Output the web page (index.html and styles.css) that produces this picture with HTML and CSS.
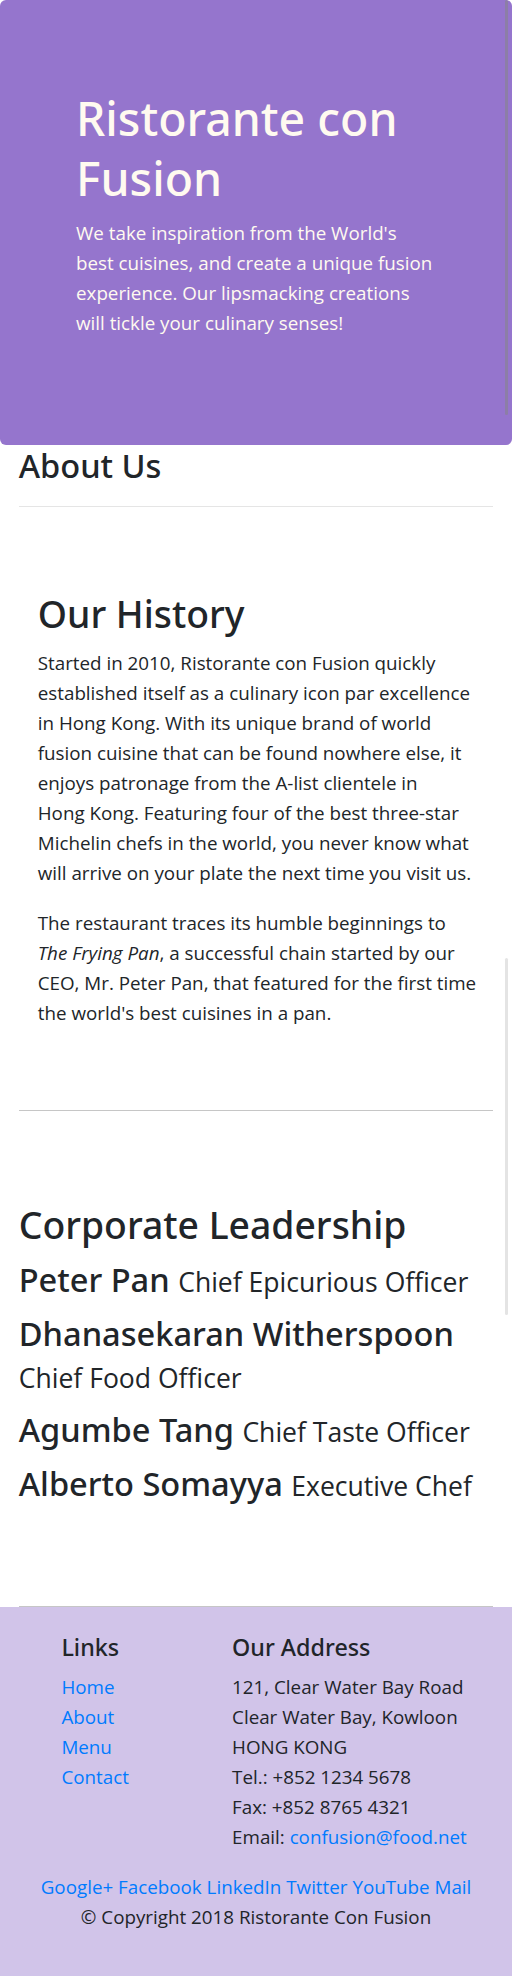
FILE: index.html
```html
<!DOCTYPE html>
<html lang="en">
<head>
<meta charset="utf-8">
<title>About Us - Ristorante con Fusion</title>
<link rel="stylesheet" href="styles.css">
</head>
<body>
<header class="jumbotron">
  <h1 class="hero-title">Ristorante con Fusion</h1>
  <p class="hero-text">We take inspiration from the World's best cuisines, and create a unique fusion experience. Our lipsmacking creations will tickle your culinary senses!</p>
  <div class="scroll-thumb scroll-thumb-dark" aria-hidden="true"></div>
</header>

<main class="container">
  <div class="row-header">
    <h3 class="page-title">About Us</h3>
    <hr class="title-rule">
  </div>

  <section class="row-content history">
    <div class="col">
      <h2 class="section-title">Our History</h2>
      <p>Started in 2010, Ristorante con Fusion quickly established itself as a culinary icon par excellence in Hong&nbsp;Kong. With its unique brand of world fusion cuisine that can be found nowhere else, it enjoys patronage from the A-list clientele in Hong&nbsp;Kong. Featuring four of the best three-star Michelin chefs in the world, you never know what will arrive on your plate the next time you visit us.</p>
      <p>The restaurant traces its humble beginnings to <em>The Frying Pan</em>, a successful chain started by our CEO, Mr. Peter Pan, that featured for the first time the world's best cuisines in a pan.</p>
    </div>
  </section>

  <section class="row-content leadership">
    <h2 class="section-title">Corporate Leadership</h2>
    <h3 class="leader">Peter Pan <small>Chief Epicurious Officer</small></h3>
    <h3 class="leader">Dhanasekaran Witherspoon <small>Chief Food Officer</small></h3>
    <h3 class="leader">Agumbe Tang <small>Chief Taste Officer</small></h3>
    <h3 class="leader">Alberto Somayya <small>Executive Chef</small></h3>
  </section>
  <div class="scroll-thumb scroll-thumb-light" aria-hidden="true"></div>
</main>

<footer class="footer">
  <div class="footer-cols">
    <div class="col-links">
      <h5 class="footer-title">Links</h5>
      <ul class="link-list">
        <li><a href="#">Home</a></li>
        <li><a href="#">About</a></li>
        <li><a href="#">Menu</a></li>
        <li><a href="#">Contact</a></li>
      </ul>
    </div>
    <div class="col-address">
      <h5 class="footer-title">Our Address</h5>
      <address>
        121, Clear Water Bay Road<br>
        Clear Water Bay, Kowloon<br>
        HONG KONG<br>
        Tel.: +852 1234 5678<br>
        Fax: +852 8765 4321<br>
        Email: <a href="#">confusion@food.net</a>
      </address>
    </div>
  </div>
  <div class="social">
    <a href="#">Google+</a> <a href="#">Facebook</a> <a href="#">LinkedIn</a> <a href="#">Twitter</a> <a href="#">YouTube</a> <a href="#">Mail</a>
  </div>
  <p class="copyright">© Copyright 2018 Ristorante Con Fusion</p>
</footer>
</body>
</html>
```

FILE: styles.css
```css
* {
  box-sizing: border-box;
}

html, body {
  margin: 0;
  padding: 0;
}

body {
  font-family: "Open Sans", "Noto Sans", sans-serif;
  font-size: 18.8px;
  line-height: 30px;
  color: #212529;
  background: #fff;
  position: relative;
}

a {
  color: #007bff;
  text-decoration: none;
}

h1, h2, h3, h5 {
  font-family: "Noto Sans", "Open Sans", sans-serif;
  font-weight: 500;
}

/* ---------- Jumbotron ---------- */
.jumbotron {
  position: relative;
  background: #9575cd;
  color: #fffaf0;
  padding: 87.5px 76px;
  border-radius: 6px;
  margin: 0;
}

.hero-title {
  font-size: 46.4px;
  line-height: 60px;
  margin: 0 0 10px;
}

.hero-text {
  max-width: 358px;
  margin: 0 0 20px;
}

.scroll-thumb {
  position: absolute;
  width: 3.5px;
  border-radius: 2px;
}

.scroll-thumb-dark {
  left: 504.5px;
  top: 0;
  height: 415px;
  background: #8c7ea6;
}

.scroll-thumb-light {
  left: 504.5px;
  top: 958px;
  height: 357px;
  background: #e4e4e4;
}

/* ---------- Main ---------- */
.container {
  padding: 0 18.75px;
}

.page-title {
  font-size: 32.6px;
  line-height: 42px;
  margin: 0;
}

.title-rule {
  border: 0;
  border-top: 1px solid rgba(0, 0, 0, 0.1);
  margin: 19px 0 20px;
}

.row-content {
  padding: 62.5px 0;
  border-bottom: 1px solid #c6c6c6;
}

.history .col {
  padding: 0 14px 0 19px;
}

.section-title {
  font-size: 37.3px;
  line-height: 48px;
  margin: 0 0 10px;
}

.history p {
  margin: 0 0 20px;
}

.leadership {
  min-height: 496px;
  display: flex;
  flex-direction: column;
  justify-content: center;
}

.leader {
  font-size: 32.6px;
  line-height: 42px;
  margin: 0 0 10px;
}

.leader small {
  font-family: "Open Sans", "Noto Sans", sans-serif;
  font-size: 81.5%;
  font-weight: 400;
}

/* ---------- Footer ---------- */
.footer {
  background: #d1c4e9;
  padding: 25px 0;
}

.footer-cols {
  display: flex;
  padding-left: 42.67px;
}

.col-links {
  width: 170.67px;
  padding: 0 18.75px;
}

.col-address {
  width: 298.67px;
  padding: 0 18.75px;
}

.footer-title {
  font-size: 23.3px;
  line-height: 30px;
  margin: 0 0 10px;
}

.link-list {
  list-style: none;
  margin: 0 0 20px;
  padding: 0;
}

address {
  font-style: normal;
  margin: 0 0 20px;
  color: #212529;
}

.social {
  text-align: center;
}

.copyright {
  text-align: center;
  margin: 0 0 20px;
}
```
